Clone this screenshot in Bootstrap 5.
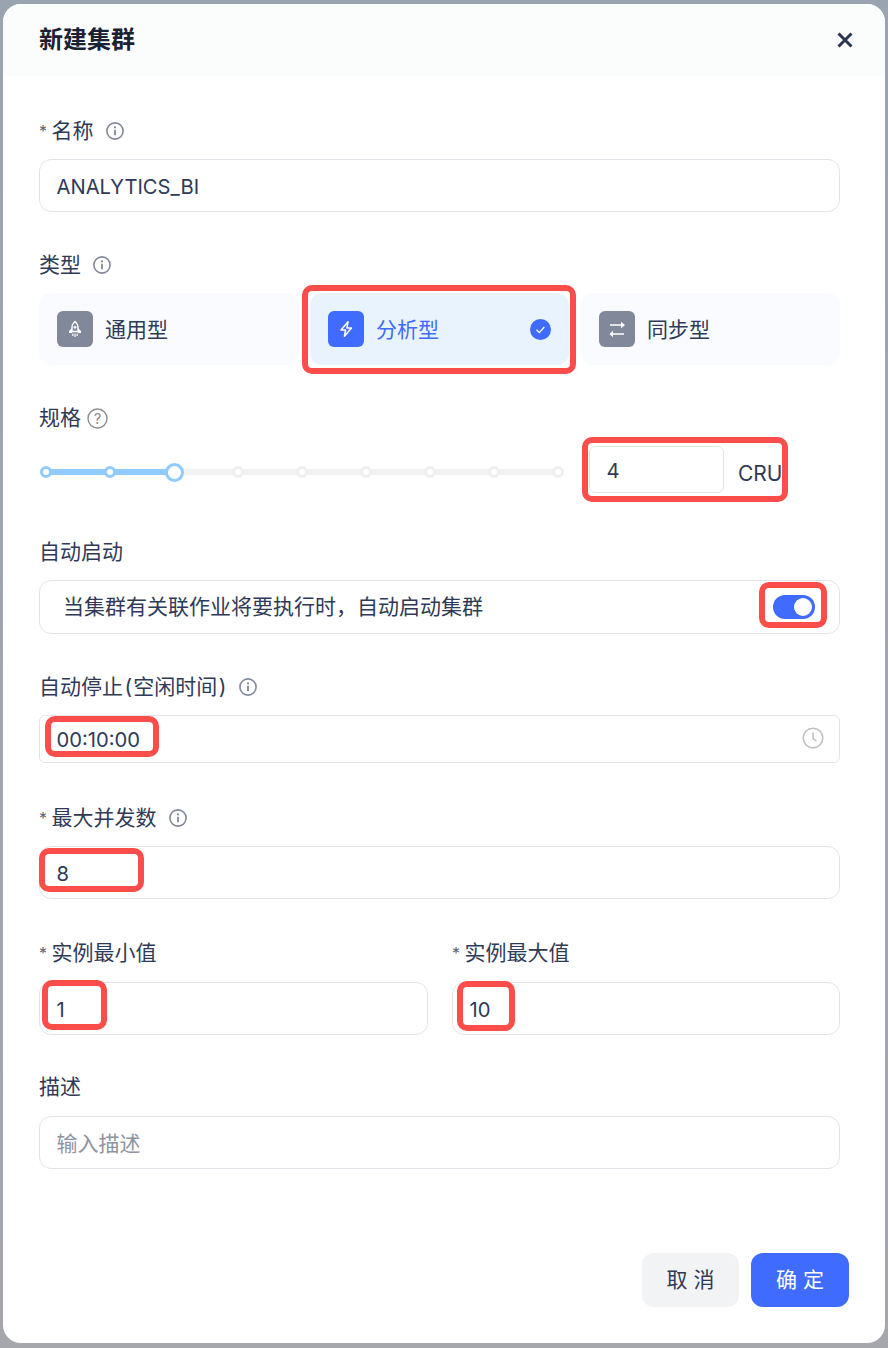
<!DOCTYPE html>
<html lang="zh-CN">
<head>
  <meta charset="UTF-8">
  <meta name="viewport" content="width=device-width, initial-scale=1">
  <title>新建集群</title>

  <link href="https://cdn.jsdelivr.net/npm/bootstrap@5.3.3/dist/css/bootstrap.min.css" rel="stylesheet">

  <style>
    html, body { height: 100%; overflow: hidden; }
    body {
      background: linear-gradient(#9aa3b0, #a6a7ad);
      padding: 4px 3px 5px;
      font-family: Inter, "Noto Sans CJK SC", sans-serif;
      font-size: 21px;
      color: #2f3a57;
    }
    .dialog-box {
      position: relative;
      height: 1339px;
      background: #fff;
      border-radius: 18px;
      overflow: hidden;
    }
    .dialog-head {
      height: 72px;
      padding: 0 32px 0 36px;
      background: #fbfdfd;
    }
    .dialog-title { font-size: 24px; font-weight: 700; color: #1a2133; margin: 0; }
    .dialog-main { padding: 41px 45px 0 36px; }
    .field-label {
      height: 28px;
      line-height: 28px;
      margin-bottom: 14px;
      gap: 12px;
    }
    .field-label.tight { gap: 6px; }
    .req-star { font-size: 16px; color: #5c6478; margin-right: -7.5px; }
    .paren-mark { padding: 0 1px 0 1.5px; }
    .field { margin-bottom: 39px; }
    .field-wide { margin-bottom: 45px; }
    .field-41 { margin-bottom: 41px; }
    .field-40 { margin-bottom: 40px; }
    .field-38 { margin-bottom: 38px; }
    .label-15 { margin-bottom: 15px; }
    .form-control.txt-input {
      height: 53px;
      padding: 1px 16.5px 0;
      font-size: 20.2px;
      color: #2f3a57;
      border: 1px solid #e3e4ea;
      border-radius: 12px;
      box-shadow: none;
    }
    .form-control.txt-input::placeholder { color: #8d93a1; font-size: 21px; }
    .form-control.time-input { height: 48px; border-radius: 6px; }
    .form-control.spec-input { width: 135px; height: 47px; border-radius: 6px; }
    .clock-icon { position: absolute; right: 16px; top: 12px; }
    .type-grid { display: grid; grid-template-columns: repeat(3, 1fr); gap: 12px; }
    .type-item {
      height: 72px;
      padding: 0 18px;
      gap: 12px;
      background: #f9fbff;
      border-radius: 12px;
    }
    .type-item.on { background: #e8f3fe; color: #3f6bff; }
    .type-ico {
      width: 36px;
      height: 36px;
      border-radius: 6px;
      background: #808899;
    }
    .type-item.on .type-ico { background: #3f6bff; }
    .type-name { margin-top: 2px; }
    .check-ico { margin-left: auto; }
    .slider-wrap { width: 526px; height: 20px; margin-top: 16px; position: relative; }
    .slider-line {
      position: absolute;
      left: 7px;
      right: 7px;
      top: 7px;
      height: 6px;
      background: #f2f2f2;
      border-radius: 3px;
    }
    .slider-fill { height: 100%; background: #91caff; border-radius: 3px; }
    .slider-cell { position: relative; width: 14px; height: 20px; }
    .slider-dot {
      width: 12px;
      height: 12px;
      background: #fff;
      border: 3px solid #f0f0f0;
      border-radius: 50%;
    }
    .slider-dot.on { border-color: #91caff; }
    .slider-dot.handle { width: 19px; height: 19px; flex: none; border-color: #91caff; }
    .cru-text { margin: 12px 0 0 14px; }
    .switch-box {
      height: 54px;
      padding: 0 24px 0 23px;
      border: 1px solid #e3e4ea;
      border-radius: 12px;
    }
    .form-check-input.big-switch {
      width: 42px;
      height: 24px;
      margin: 0;
      border: 0;
      background-color: #3f6bff;
      box-shadow: none;
    }
    .half-grid { display: grid; grid-template-columns: 389px 388px; gap: 24px; }
    .dialog-foot {
      position: absolute;
      right: 36px;
      bottom: 36px;
      gap: 12px;
    }
    .btn.foot-btn {
      height: 54px;
      font-size: 21px;
      letter-spacing: 6px;
      padding: 0 0 0 6px;
      border: 0;
      border-radius: 12px;
    }
    .btn.foot-cancel { width: 97px; background: #f2f3f5; color: #2f3a57; }
    .btn.foot-ok { width: 98px; background: #3f6bff; color: #fff; }
    .red-mark {
      position: absolute;
      border: 6px solid #fb4d4a;
      border-radius: 10px;
      pointer-events: none;
    }
    .mark-type { left: 299px; top: 281px; width: 274px; height: 89px; }
    .mark-spec { left: 579px; top: 433px; width: 206px; height: 65px; }
    .mark-switch { left: 756px; top: 578px; width: 68px; height: 46px; }
    .mark-time { left: 42px; top: 712px; width: 114px; height: 41px; }
    .mark-conc { left: 36px; top: 844px; width: 105px; height: 44px; }
    .mark-min { left: 39px; top: 976px; width: 65px; height: 50px; }
    .mark-max { left: 454px; top: 977px; width: 58px; height: 50px; }
  </style>
</head>

<body>

<div class="dialog-box">

  <!-- Header -->
  <div class="dialog-head d-flex align-items-center justify-content-between">
    <h5 class="dialog-title">新建集群</h5>
    <svg width="16" height="16" viewBox="0 0 16 16"><path d="M1.5 1.5l13 13M14.5 1.5l-13 13" stroke="#2c3552" stroke-width="3" fill="none"/></svg>
  </div>

  <div class="dialog-main">

    <!-- Name -->
    <div class="field">
      <div class="field-label d-flex align-items-center">
        <span class="req-star">*</span><span>名称</span>
        <svg width="18" height="18" viewBox="0 0 18 18"><circle cx="9" cy="9" r="8.1" fill="none" stroke="#808899" stroke-width="1.6"/><circle cx="9" cy="5.4" r="1.1" fill="#808899"/><path d="M9 7.800v5.400" stroke="#808899" stroke-width="1.800"/></svg>
      </div>
      <input type="text" class="form-control txt-input" value="ANALYTICS_BI">
    </div>

    <!-- Type -->
    <div class="field">
      <div class="field-label d-flex align-items-center">
        <span>类型</span>
        <svg width="18" height="18" viewBox="0 0 18 18"><circle cx="9" cy="9" r="8.1" fill="none" stroke="#808899" stroke-width="1.6"/><circle cx="9" cy="5.4" r="1.1" fill="#808899"/><path d="M9 7.800v5.400" stroke="#808899" stroke-width="1.800"/></svg>
      </div>
      <div class="type-grid">
        <div class="type-item d-flex align-items-center">
          <span class="type-ico d-flex align-items-center justify-content-center">
            <svg width="20" height="20" viewBox="0 0 20 20"><path d="M10 2.500C12.300 4.300 13 6.800 13 9v3.500H7V9C7 6.800 7.700 4.300 10 2.500z" fill="none" stroke="#fff" stroke-width="1.400"/><path d="M7 9L4 12v2h3zM13 9l3 3v2h-3z" fill="#fff"/><circle cx="10" cy="8.300" r="1.400" fill="#fff"/><path d="M7.800 14.500v2.500M10 14.500v3.500M12.200 14.500v2.500" stroke="#fff" stroke-width="1.200"/></svg>
          </span>
          <span class="type-name">通用型</span>
        </div>
        <div class="type-item on d-flex align-items-center">
          <span class="type-ico d-flex align-items-center justify-content-center">
            <svg width="20" height="20" viewBox="0 0 20 20"><path d="M12 2.800L5 11h4.600l-1.200 6.200L15.500 9h-4.600z" fill="none" stroke="#fff" stroke-width="1.500" stroke-linejoin="round"/></svg>
          </span>
          <span class="type-name">分析型</span>
          <svg class="check-ico" width="21" height="21" viewBox="0 0 21 21"><circle cx="10.500" cy="10.500" r="10.500" fill="#3f6bff"/><path d="M6.500 10.800l2.800 2.800 5-5.600" fill="none" stroke="#fff" stroke-width="1.300"/></svg>
        </div>
        <div class="type-item d-flex align-items-center">
          <span class="type-ico d-flex align-items-center justify-content-center">
            <svg width="20" height="20" viewBox="0 0 20 20"><path d="M3 6h12M17 15H5" fill="none" stroke="#fff" stroke-width="1.600"/><path d="M14 2.800L18 6l-4 3.200zM6 11.800L2.500 15 6 18.200z" fill="#fff"/></svg>
          </span>
          <span class="type-name">同步型</span>
        </div>
      </div>
    </div>

    <!-- Spec -->
    <div class="field-wide">
      <div class="field-label tight d-flex align-items-center">
        <span>规格</span>
        <svg width="21" height="21" viewBox="0 0 21 21"><circle cx="10.500" cy="10.500" r="9.500" fill="none" stroke="#8c8c8c" stroke-width="1.400"/><text x="10.500" y="16" text-anchor="middle" font-size="15" fill="#8c8c8c" font-family="Inter, sans-serif">?</text></svg>
      </div>
      <div class="d-flex align-items-start">
        <div class="slider-wrap">
          <div class="slider-line"><div class="slider-fill" style="width: 25%"></div></div>
          <div class="d-flex justify-content-between position-relative">
            <div class="slider-cell d-flex align-items-center justify-content-center"><div class="slider-dot on"></div></div>
            <div class="slider-cell d-flex align-items-center justify-content-center"><div class="slider-dot on"></div></div>
            <div class="slider-cell d-flex align-items-center justify-content-center"><div class="slider-dot handle"></div></div>
            <div class="slider-cell d-flex align-items-center justify-content-center"><div class="slider-dot"></div></div>
            <div class="slider-cell d-flex align-items-center justify-content-center"><div class="slider-dot"></div></div>
            <div class="slider-cell d-flex align-items-center justify-content-center"><div class="slider-dot"></div></div>
            <div class="slider-cell d-flex align-items-center justify-content-center"><div class="slider-dot"></div></div>
            <div class="slider-cell d-flex align-items-center justify-content-center"><div class="slider-dot"></div></div>
            <div class="slider-cell d-flex align-items-center justify-content-center"><div class="slider-dot"></div></div>
          </div>
        </div>
        <input type="text" class="form-control txt-input spec-input ms-4" value="4">
        <span class="cru-text">CRU</span>
      </div>
    </div>

    <!-- Auto start -->
    <div class="field">
      <div class="field-label d-flex align-items-center"><span>自动启动</span></div>
      <div class="switch-box d-flex align-items-center justify-content-between">
        <span>当集群有关联作业将要执行时，自动启动集群</span>
        <div class="form-check form-switch p-0 m-0 d-flex"><input class="form-check-input big-switch" type="checkbox" role="switch" checked></div>
      </div>
    </div>

    <!-- Auto stop -->
    <div class="field-41">
      <div class="field-label d-flex align-items-center">
        <span>自动停止<span class="paren-mark">(</span>空闲时间<span class="paren-mark">)</span></span>
        <svg width="18" height="18" viewBox="0 0 18 18"><circle cx="9" cy="9" r="8.1" fill="none" stroke="#808899" stroke-width="1.6"/><circle cx="9" cy="5.4" r="1.1" fill="#808899"/><path d="M9 7.800v5.400" stroke="#808899" stroke-width="1.800"/></svg>
      </div>
      <div class="position-relative">
        <input type="text" class="form-control txt-input time-input" value="00:10:00">
        <svg class="clock-icon" width="22" height="22" viewBox="0 0 22 22"><circle cx="11" cy="11" r="9.800" fill="none" stroke="#bfbfbf" stroke-width="1.500"/><path d="M11 5.500V11.500L14.500 14" fill="none" stroke="#bfbfbf" stroke-width="1.500"/></svg>
      </div>
    </div>

    <!-- Max concurrency -->
    <div class="field-40">
      <div class="field-label d-flex align-items-center">
        <span class="req-star">*</span><span>最大并发数</span>
        <svg width="18" height="18" viewBox="0 0 18 18"><circle cx="9" cy="9" r="8.1" fill="none" stroke="#808899" stroke-width="1.6"/><circle cx="9" cy="5.4" r="1.1" fill="#808899"/><path d="M9 7.800v5.400" stroke="#808899" stroke-width="1.800"/></svg>
      </div>
      <input type="text" class="form-control txt-input" value="8">
    </div>

    <!-- Instances -->
    <div class="field-38 half-grid">
      <div>
        <div class="field-label label-15 d-flex align-items-center"><span class="req-star">*</span><span>实例最小值</span></div>
        <input type="text" class="form-control txt-input" value="1">
      </div>
      <div>
        <div class="field-label label-15 d-flex align-items-center"><span class="req-star">*</span><span>实例最大值</span></div>
        <input type="text" class="form-control txt-input" value="10">
      </div>
    </div>

    <!-- Description -->
    <div>
      <div class="field-label label-15 d-flex align-items-center"><span>描述</span></div>
      <input type="text" class="form-control txt-input" placeholder="输入描述">
    </div>

  </div>

  <!-- Footer -->
  <div class="dialog-foot d-flex">
    <button type="button" class="btn foot-btn foot-cancel">取消</button>
    <button type="button" class="btn foot-btn foot-ok">确定</button>
  </div>

  <!-- Red review marks -->
  <div class="red-mark mark-type"></div>
  <div class="red-mark mark-spec"></div>
  <div class="red-mark mark-switch"></div>
  <div class="red-mark mark-time"></div>
  <div class="red-mark mark-conc"></div>
  <div class="red-mark mark-min"></div>
  <div class="red-mark mark-max"></div>

</div>

<script src="https://cdn.jsdelivr.net/npm/bootstrap@5.3.3/dist/js/bootstrap.bundle.min.js"></script>
</body>
</html>
